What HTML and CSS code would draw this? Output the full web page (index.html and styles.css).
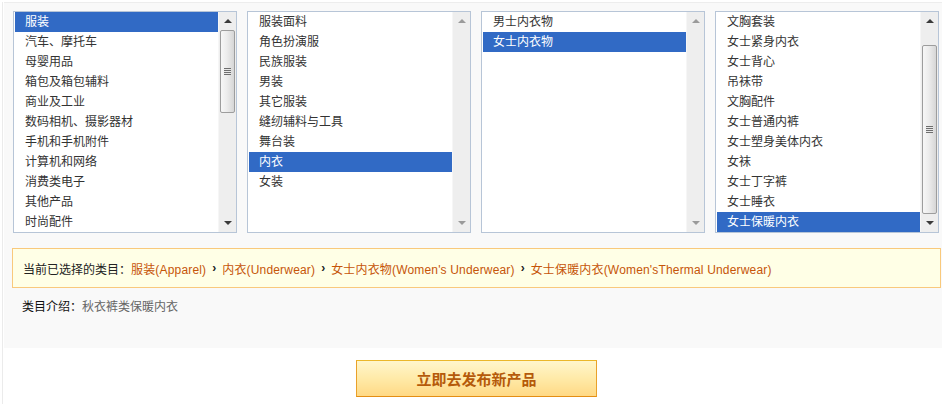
FILE: index.html
```html
<!DOCTYPE html>
<html lang="zh-CN">
<head>
<meta charset="utf-8">
<title>选择类目</title>
<link rel="stylesheet" href="styles.css">
</head>
<body>
<div class="page">
  <div class="panel">
    <div class="lists">
      <div class="listbox">
        <ul class="items">
          <li class="sel">服装</li>
          <li>汽车、摩托车</li>
          <li>母婴用品</li>
          <li>箱包及箱包辅料</li>
          <li>商业及工业</li>
          <li>数码相机、摄影器材</li>
          <li>手机和手机附件</li>
          <li>计算机和网络</li>
          <li>消费类电子</li>
          <li>其他产品</li>
          <li>时尚配件</li>
        </ul>
        <div class="sb">
          <div class="sb-btn"><span class="arr up"></span></div>
          <div class="sb-track">
            <div class="thumb" style="margin-top:0;height:83px"><span class="grip"></span></div>
          </div>
          <div class="sb-btn"><span class="arr down"></span></div>
        </div>
      </div>
      <div class="listbox">
        <ul class="items">
          <li>服装面料</li>
          <li>角色扮演服</li>
          <li>民族服装</li>
          <li>男装</li>
          <li>其它服装</li>
          <li>缝纫辅料与工具</li>
          <li>舞台装</li>
          <li class="sel">内衣</li>
          <li>女装</li>
        </ul>
        <div class="sb dim">
          <div class="sb-btn"><span class="arr up"></span></div>
          <div class="sb-track"></div>
          <div class="sb-btn"><span class="arr down"></span></div>
        </div>
      </div>
      <div class="listbox">
        <ul class="items">
          <li>男士内衣物</li>
          <li class="sel">女士内衣物</li>
        </ul>
        <div class="sb dim">
          <div class="sb-btn"><span class="arr up"></span></div>
          <div class="sb-track"></div>
          <div class="sb-btn"><span class="arr down"></span></div>
        </div>
      </div>
      <div class="listbox">
        <ul class="items">
          <li>文胸套装</li>
          <li>女士紧身内衣</li>
          <li>女士背心</li>
          <li>吊袜带</li>
          <li>文胸配件</li>
          <li>女士普通内裤</li>
          <li>女士塑身美体内衣</li>
          <li>女袜</li>
          <li>女士丁字裤</li>
          <li>女士睡衣</li>
          <li class="sel">女士保暖内衣</li>
        </ul>
        <div class="sb">
          <div class="sb-btn"><span class="arr up"></span></div>
          <div class="sb-track">
            <div class="thumb" style="margin-top:15px;height:169px"><span class="grip"></span></div>
          </div>
          <div class="sb-btn"><span class="arr down"></span></div>
        </div>
      </div>
    </div>
    <div class="crumbs">
      <span class="label">当前已选择的类目：</span><a class="link">服装(Apparel)</a><span class="sep">›</span><a class="link">内衣(Underwear)</a><span class="sep">›</span><a class="link">女士内衣物(Women's Underwear)</a><span class="sep">›</span><a class="link">女士保暖内衣(Women'sThermal Underwear)</a>
    </div>
    <div class="intro"><span class="intro-label">类目介绍：</span><span class="intro-text">秋衣裤类保暖内衣</span></div>
  </div>
  <div class="actions">
    <button class="publish">立即去发布新产品</button>
  </div>
</div>
</body>
</html>
```

FILE: styles.css
```css
html, body {
  margin: 0;
  padding: 0;
  background: #fff;
}
body {
  font-family: "Liberation Sans", "Noto Sans CJK SC", sans-serif;
  font-size: 12px;
  color: #333;
}
.page {
  margin-top: 2px;
  margin-left: 2px;
  border-left: 1px solid #ebebeb;
  height: 402px;
  box-sizing: border-box;
}
.panel {
  margin-left: 1px;
  background: #f9f9f9;
  border-top: 1px solid #ededed;
  padding: 8px 0 0 0;
  height: 346px;
  box-sizing: border-box;
}
.lists {
  display: flex;
  gap: 10px;
  padding-left: 9px;
}
.listbox {
  width: 224px;
  height: 222px;
  box-sizing: border-box;
  border: 1px solid #b7c5d7;
  background: #fff;
  display: flex;
}
.items {
  list-style: none;
  margin: 0;
  padding: 0 0 0 1px;
  flex: 1;
}
.items li {
  height: 20px;
  line-height: 20px;
  padding-left: 10px;
  color: #333;
  white-space: nowrap;
}
.items li.sel {
  background: #316ac5;
  color: #fff;
}
.sb {
  width: 17px;
  background: #eeeeee;
  border-left: 1px solid #f6f6f6;
  display: flex;
  flex-direction: column;
}
.sb-btn {
  height: 18px;
  display: flex;
  align-items: center;
  justify-content: center;
}
.sb-track {
  flex: 1;
  display: flex;
  flex-direction: column;
}
.arr {
  width: 0;
  height: 0;
  border-left: 4px solid transparent;
  border-right: 4px solid transparent;
}
.arr.up { border-bottom: 4px solid #3a3a3a; }
.arr.down { border-top: 4px solid #3a3a3a; }
.sb.dim .arr.up { border-bottom-color: #9a9a9a; }
.sb.dim .arr.down { border-top-color: #9a9a9a; }
.thumb {
  margin-left: 1px;
  width: 15px;
  box-sizing: border-box;
  border: 1px solid #9d9d9d;
  border-radius: 2px;
  background: linear-gradient(90deg, #f7f7f7 0%, #ececec 45%, #d6d6d6 100%);
  display: flex;
  align-items: center;
  justify-content: center;
}
.grip {
  width: 7px;
  height: 7px;
  background: repeating-linear-gradient(180deg, #6e6e6e 0, #6e6e6e 1px, #e8e8e8 1px, #e8e8e8 2px);
}
.crumbs {
  margin: 15px 1px 0 8px;
  height: 40px;
  box-sizing: border-box;
  border: 1px solid #f9c97c;
  background: #ffffe6;
  padding-left: 10px;
  display: flex;
  align-items: center;
  white-space: nowrap;
  font-family: "Liberation Sans", "Noto Sans CJK SC", sans-serif;
  font-size: 12px;
}
.crumbs .label {
  color: #222;
  font-family: "Noto Sans CJK SC", sans-serif;
}
.crumbs .link {
  color: #c65509;
  letter-spacing: 0.17px;
}
.crumbs .sep {
  color: #222;
  font-weight: bold;
  padding: 0 6px;
  font-size: 12px;
}
.intro {
  margin: 8px 0 0 18px;
  line-height: 20px;
  font-family: "Noto Sans CJK SC", sans-serif;
}
.intro-label {
  color: #111;
}
.intro-text {
  color: #666;
}
.actions {
  padding-top: 12px;
  padding-left: 353px;
}
.publish {
  width: 241px;
  height: 37px;
  border: 1px solid #e9a12a;
  border-top-color: #ebb72a;
  border-bottom-color: #e48e14;
  background: linear-gradient(180deg, #fff6cc 0%, #ffeaa8 50%, #ffd985 100%);
  color: #b55a0a;
  font-family: "Noto Sans CJK SC", sans-serif;
  font-size: 15px;
  font-weight: bold;
  padding: 0;
  cursor: pointer;
}
```
